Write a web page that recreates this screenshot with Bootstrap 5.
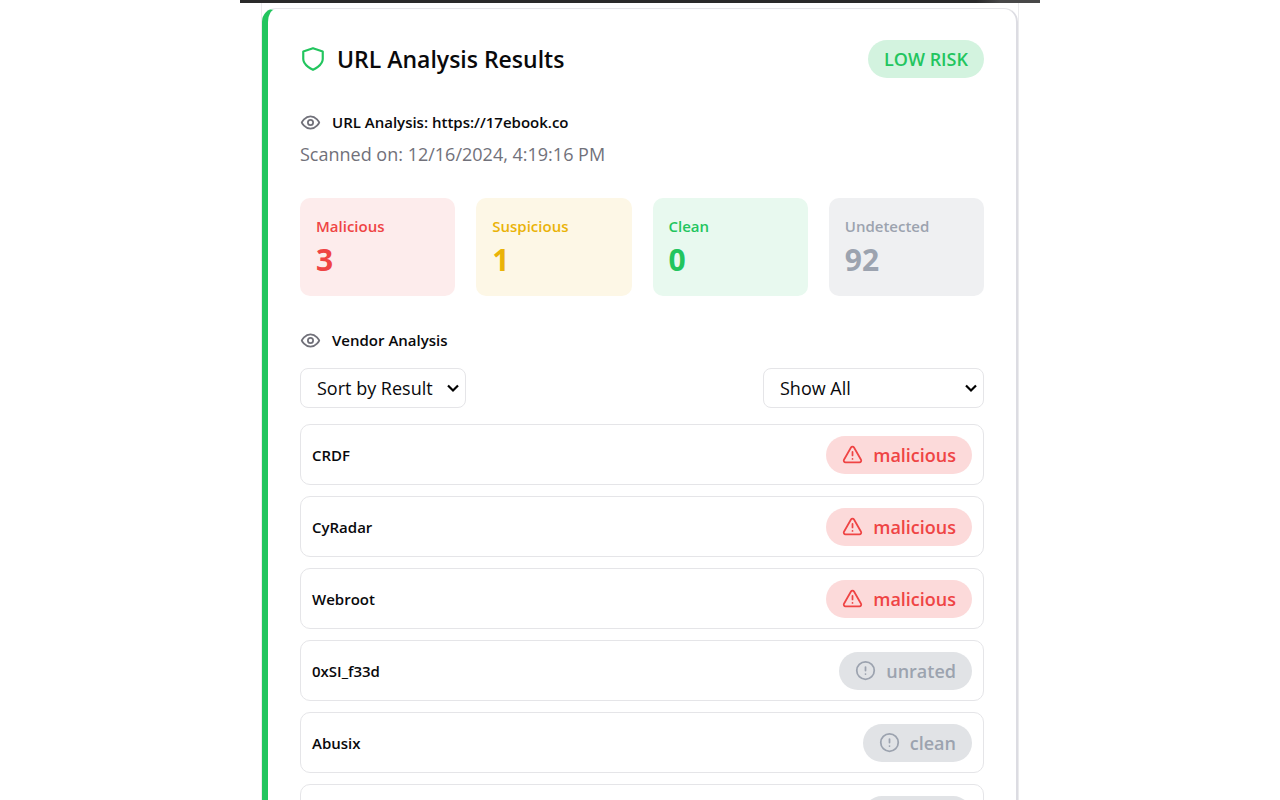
<!DOCTYPE html>
<html lang="en">
<head>
<meta charset="utf-8">
<meta name="viewport" content="width=device-width, initial-scale=1">
<title>URL Analysis Results</title>
<link href="https://cdn.jsdelivr.net/npm/bootstrap@5.3.0/dist/css/bootstrap.min.css" rel="stylesheet">
<style>
  :root { --good: #22c55e; --bad: #ef4444; --warn: #eab308; --mute: #9ca3af; --line: #e5e5e8; }
  body { font-family: "Open Sans", "Noto Sans", sans-serif; font-size: 18px; line-height: 28px; color: #09090b; background: #fff; }
  svg { fill: none; stroke: currentColor; stroke-width: 2; stroke-linecap: round; stroke-linejoin: round; flex: none; }
  .shell { max-width: 800px; }
  .topbar { height: 3px; background: linear-gradient(90deg, #2a2a2a 92%, #484848 95%); }
  .frame { margin: 0 21px; padding: 5px 0; border: solid #ebebed; border-width: 0 1px; }
  .report { border: 1px solid var(--line); border-right: 2px solid #dcdce2; border-left: 6px solid var(--good); border-radius: 14px; padding: 31px 32px; }
  .report-title { font-size: 23px; line-height: 32px; font-weight: 600; gap: 11px; }
  .report-title svg { color: var(--good); }
  .section-title { font-size: 15px; line-height: 24px; font-weight: 600; gap: 11px; }
  .section-title svg, .scanned { color: #71717a; }
  .scanned { margin-top: 6px; }
  .pill { height: 38px; padding: 0 16px; border-radius: 19px; font-size: 18px; font-weight: 600; gap: 10px; }
  .pill-good { color: var(--good); background: #d3f3df; }
  .pill-bad { color: var(--bad); background: #fcdada; }
  .pill-mute { color: var(--mute); background: #e1e3e6; }
  .stats { display: grid; grid-template-columns: repeat(4, 1fr); gap: 21px; margin-top: 30px; }
  .stat { height: 98px; padding: 16px; border-radius: 10px; }
  .stat-name { font-size: 15px; line-height: 24px; font-weight: 600; }
  .stat-value { font-size: 30px; line-height: 44px; font-weight: 700; }
  .stat-bad { color: var(--bad); background: #fdecec; }
  .stat-warn { color: var(--warn); background: #fdf7e6; }
  .stat-good { color: var(--good); background: #e8f9ef; }
  .stat-mute { color: var(--mute); background: #eff0f2; }
  .picker { height: 40px; font-size: 18px; color: #09090b; border: 1px solid var(--line); border-radius: 8px; padding: 0 32px 0 16px; background-color: #fff; background-position: right 5px center; background-size: 14px 14px;
    background-image: url("data:image/svg+xml,%3Csvg xmlns='http://www.w3.org/2000/svg' viewBox='0 0 14 14'%3E%3Cpath d='M2 4.5l5 5 5-5' fill='none' stroke='%23000' stroke-width='2.2'/%3E%3C/svg%3E"); }
  .picker-sort { width: 166px; }
  .picker-show { width: 221px; }
  .vendors { gap: 11px; margin-top: 16px; }
  .vendor { height: 61px; padding: 0 11px; border: 1px solid var(--line); border-radius: 10px; font-size: 15px; font-weight: 600; }
</style>
</head>
<body>
<svg class="d-none" aria-hidden="true">
  <symbol id="eye" viewBox="0 0 24 24"><path d="M2 12s3.500-7 10-7 10 7 10 7-3.500 7-10 7-10-7-10-7z"/><circle cx="12" cy="12" r="3"/></symbol>
  <symbol id="shield" viewBox="0 0 24 24"><path d="M12 22s9-4 9-10V5l-9-3-9 3v7c0 6 9 10 9 10z"/></symbol>
  <symbol id="alert" viewBox="0 0 24 24"><path d="M21.730 18l-8-14a2 2 0 0 0-3.480 0l-8 14A2 2 0 0 0 4 21h16a2 2 0 0 0 1.730-3z"/><path d="M12 9v4M12 17h.01"/></symbol>
  <symbol id="info" viewBox="0 0 24 24"><circle cx="12" cy="12" r="10"/><path d="M12 8v4M12 16h.01"/></symbol>
</svg>
<div class="vh-100 overflow-hidden">
<div class="shell mx-auto">
  <div class="topbar"></div>
  <div class="frame">
    <main class="report">
      <header class="d-flex justify-content-between align-items-center">
        <h1 class="report-title d-flex align-items-center mb-0"><svg width="26" height="26"><use href="#shield"/></svg>URL Analysis Results</h1>
        <span class="pill pill-good d-inline-flex align-items-center">LOW RISK</span>
      </header>
      <h2 class="section-title d-flex align-items-center mb-0 mt-4 pt-2"><svg width="21" height="21"><use href="#eye"/></svg>URL Analysis: https://17ebook.co</h2>
      <p class="scanned mb-0">Scanned on: 12/16/2024, 4:19:16 PM</p>
      <section class="stats">
        <div class="stat stat-bad"><div class="stat-name">Malicious</div><div class="stat-value">3</div></div>
        <div class="stat stat-warn"><div class="stat-name">Suspicious</div><div class="stat-value">1</div></div>
        <div class="stat stat-good"><div class="stat-name">Clean</div><div class="stat-value">0</div></div>
        <div class="stat stat-mute"><div class="stat-name">Undetected</div><div class="stat-value">92</div></div>
      </section>
      <h2 class="section-title d-flex align-items-center mt-4 pt-2 mb-3"><svg width="21" height="21"><use href="#eye"/></svg>Vendor Analysis</h2>
      <div class="d-flex justify-content-between">
        <select class="form-select picker picker-sort" aria-label="Sort vendors"><option>Sort by Result</option></select>
        <select class="form-select picker picker-show" aria-label="Filter vendors"><option>Show All</option></select>
      </div>
      <ul class="vendors list-unstyled d-flex flex-column mb-0">
        <li class="vendor d-flex justify-content-between align-items-center"><span>CRDF</span><span class="pill pill-bad d-inline-flex align-items-center"><svg width="21" height="21"><use href="#alert"/></svg>malicious</span></li>
        <li class="vendor d-flex justify-content-between align-items-center"><span>CyRadar</span><span class="pill pill-bad d-inline-flex align-items-center"><svg width="21" height="21"><use href="#alert"/></svg>malicious</span></li>
        <li class="vendor d-flex justify-content-between align-items-center"><span>Webroot</span><span class="pill pill-bad d-inline-flex align-items-center"><svg width="21" height="21"><use href="#alert"/></svg>malicious</span></li>
        <li class="vendor d-flex justify-content-between align-items-center"><span>0xSI_f33d</span><span class="pill pill-mute d-inline-flex align-items-center"><svg width="21" height="21"><use href="#info"/></svg>unrated</span></li>
        <li class="vendor d-flex justify-content-between align-items-center"><span>Abusix</span><span class="pill pill-mute d-inline-flex align-items-center"><svg width="21" height="21"><use href="#info"/></svg>clean</span></li>
        <li class="vendor d-flex justify-content-end align-items-center"><span class="pill pill-mute d-inline-flex align-items-center"><svg width="21" height="21"><use href="#info"/></svg>clean</span></li>
      </ul>
    </main>
  </div>
</div>
</div>
<script src="https://cdn.jsdelivr.net/npm/bootstrap@5.3.0/dist/js/bootstrap.bundle.min.js"></script>
</body>
</html>
